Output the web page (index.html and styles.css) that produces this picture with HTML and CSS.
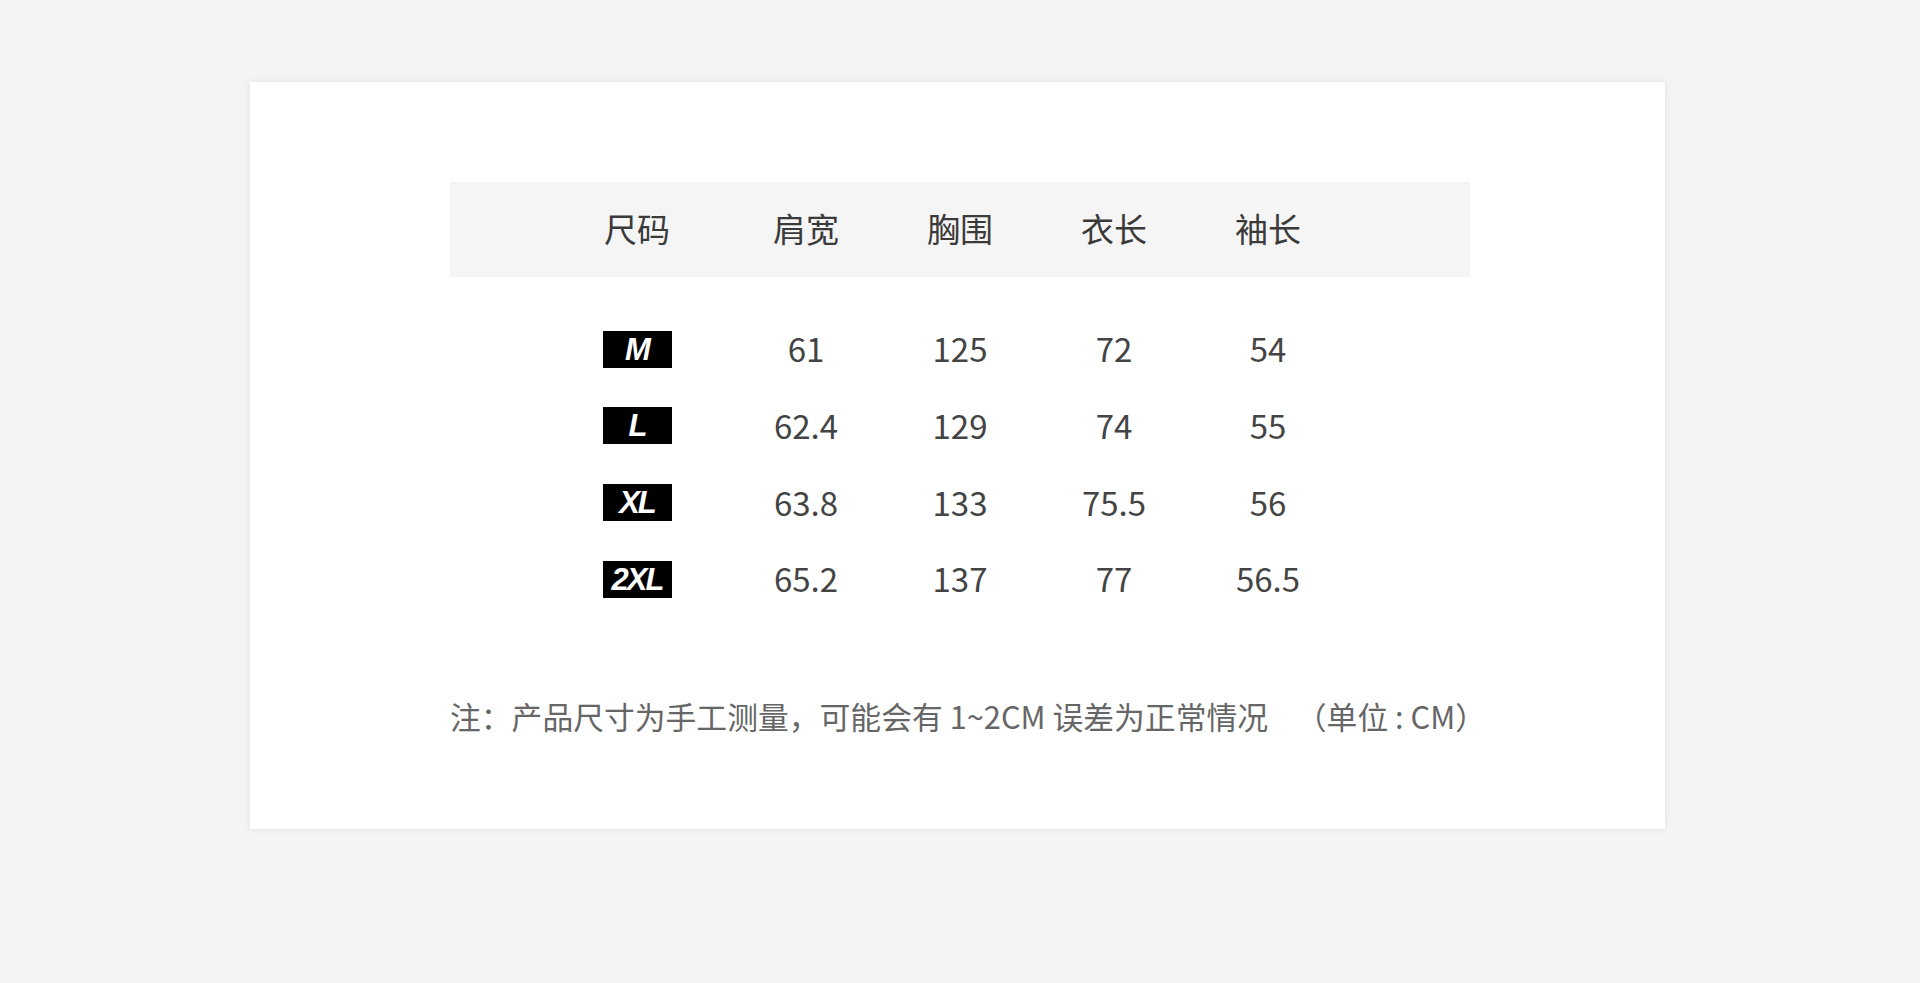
FILE: index.html
```html
<!DOCTYPE html>
<html lang="zh-CN">
<head>
<meta charset="utf-8">
<title>尺码表</title>
<link rel="stylesheet" href="styles.css">
</head>
<body>
<div class="card">
  <div class="table">
    <div class="row head">
      <div class="cell">尺码</div>
      <div class="cell">肩宽</div>
      <div class="cell">胸围</div>
      <div class="cell">衣长</div>
      <div class="cell">袖长</div>
    </div>
    <div class="body">
      <div class="row">
        <div class="cell"><span class="badge">M</span></div>
        <div class="cell">61</div>
        <div class="cell">125</div>
        <div class="cell">72</div>
        <div class="cell">54</div>
      </div>
      <div class="row">
        <div class="cell"><span class="badge">L</span></div>
        <div class="cell">62.4</div>
        <div class="cell">129</div>
        <div class="cell">74</div>
        <div class="cell">55</div>
      </div>
      <div class="row">
        <div class="cell"><span class="badge">XL</span></div>
        <div class="cell">63.8</div>
        <div class="cell">133</div>
        <div class="cell">75.5</div>
        <div class="cell">56</div>
      </div>
      <div class="row">
        <div class="cell"><span class="badge">2XL</span></div>
        <div class="cell">65.2</div>
        <div class="cell">137</div>
        <div class="cell">77</div>
        <div class="cell">56.5</div>
      </div>
    </div>
  </div>
  <div class="note">
    <span>注：产品尺寸为手工测量，可能会有 1~2CM 误差为正常情况</span>
    <span class="unit">（单位 : CM）</span>
  </div>
</div>
</body>
</html>
```
FILE: styles.css
```css
html, body {
  margin: 0;
  padding: 0;
  background: #f4f4f4;
}
body {
  font-family: "Noto Sans CJK SC", "Noto Sans", sans-serif;
  padding-top: 82px;
  height: 983px;
  box-sizing: border-box;
}
.card {
  margin-left: 250px;
  width: 1415px;
  height: 747px;
  box-sizing: border-box;
  background: #fff;
  box-shadow: 0 0 8px rgba(0, 0, 0, 0.08);
  padding: 100px 195px 0 200px;
}
.table {
  width: 1020px;
}
.row {
  display: grid;
  grid-template-columns: 184px repeat(4, 154px);
  padding-left: 95px;
  align-items: center;
}
.cell {
  text-align: center;
  display: flex;
  justify-content: center;
  align-items: center;
}
.head {
  background: #f5f5f5;
  height: 95px;
  font-size: 33px;
  color: #3a3a3a;
}
.head .cell {
  padding-bottom: 3px;
}
.body {
  padding-top: 34px;
}
.body .row {
  height: 76.67px;
  font-size: 33px;
  color: #444;
}
.body .cell {
  padding-bottom: 2px;
}
.badge {
  display: flex;
  justify-content: center;
  align-items: center;
  width: 69px;
  height: 37px;
  margin-top: 2px;
  background: #000;
  color: #fff;
  font-family: "Liberation Sans", Arial, sans-serif;
  font-weight: bold;
  font-style: italic;
  font-size: 31px;
  letter-spacing: -2px;
  line-height: 1;
}
.note {
  margin-top: 78px;
  width: 1020px;
  display: flex;
  justify-content: space-between;
  font-size: 30.8px;
  line-height: 40px;
  color: #666;
  white-space: nowrap;
}
.unit {
  margin-right: -16px;
}
```
